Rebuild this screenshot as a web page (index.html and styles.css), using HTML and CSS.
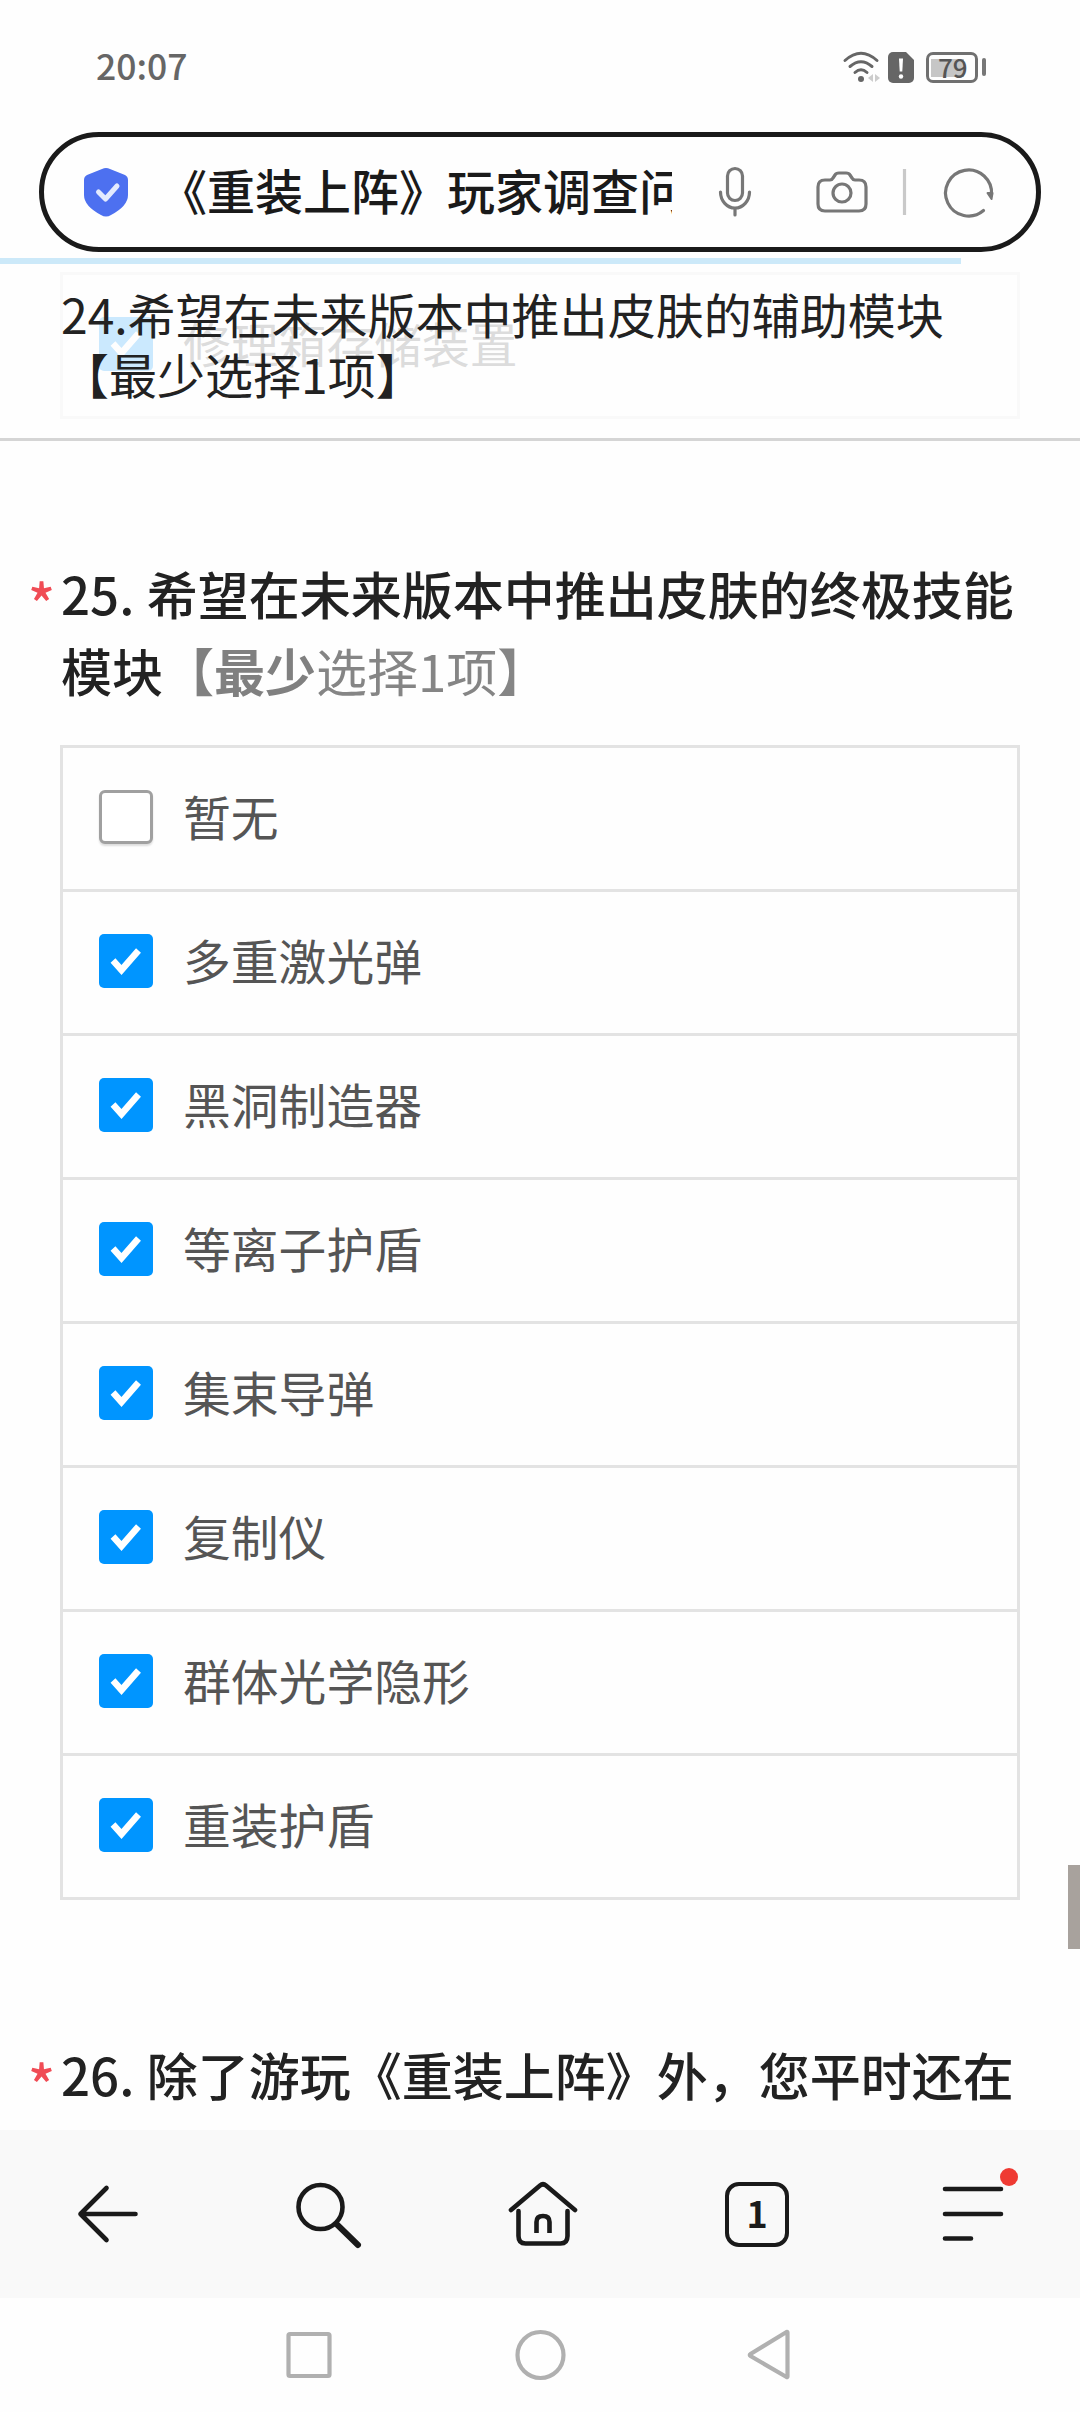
FILE: index.html
```html
<!DOCTYPE html>
<html lang="zh-CN">
<head>
<meta charset="utf-8">
<title>《重装上阵》玩家调查问卷</title>
<link rel="stylesheet" href="styles.css">
</head>
<body>
<svg class="defs" width="0" height="0"><symbol id="tick" viewBox="0 0 54 54"><path d="M14 26.500l8.500 9.500L39.500 16.500" fill="none" stroke="#fff" stroke-width="6.500"/></symbol></svg>
<div class="screen">
  <header class="status">
    <span class="time">20:07</span>
    <div class="status-icons">
      <svg class="wifi" width="38" height="34" viewBox="842 50 38 34" fill="none" stroke="#666" stroke-width="3" stroke-linecap="round"><path d="M845 60.500q16-14.500 32 0M850 66.500q11-9.500 22 0M855 72.500q6-5.500 12 0"/><circle cx="861" cy="79" r="3" fill="#666" stroke="none"/><path d="M873 74v8l-5-4zM875 74v8l5-4z" fill="#ccc" stroke="none"/></svg>
      <svg class="sim" width="26" height="31" viewBox="0 0 26 31"><path d="M5 0h13l8 8v18a5 5 0 0 1-5 5H5a5 5 0 0 1-5-5V5a5 5 0 0 1 5-5z" fill="#666"/><path d="M11 6.500h4l-.7 13h-2.600z" fill="#fff"/><circle cx="13" cy="24.500" r="2.200" fill="#fff"/></svg>
      <div class="battery"><span>79</span></div><i class="battery-cap"></i>
    </div>
  </header>
  <div class="address">
    <svg width="46" height="50" viewBox="0 0 46 50"><path d="M19 2q4-2 8 0l15 6q3 1.500 3 5v15q0 11-17 20-5 3-10 0Q1 39 1 28V13q0-3.500 3-5z" fill="#4d70f0"/><path d="M15.500 25l7 7L34 19" fill="none" stroke="#e3eafe" stroke-width="5" stroke-linecap="round" stroke-linejoin="round"/></svg>
    <div class="title">《重装上阵》玩家调查问卷</div>
    <svg class="actions" width="300" height="60" viewBox="700 162 300 60" fill="none" stroke="#777" stroke-width="3.200" stroke-linecap="round" stroke-linejoin="round"><rect x="727.500" y="168.500" width="15" height="32" rx="7.500"/><path d="M720.500 192a14.500 16 0 0 0 29 0M735 208v7"/><path d="M825 180h5q2 0 3-2l2-3q1-2 4-2h7q3 0 4 2l2 3q1 2 3 2h4q7 0 7 7v17q0 7-7 7h-34q-7 0-7-7v-17q0-7 7-7z"/><circle cx="842" cy="193" r="9"/><path d="M904.500 169v46" stroke="#c9c9c9" stroke-linecap="butt"/><path d="M983.500 210.500A23 23 0 1 1 991.500 195"/><path d="M987.500 193h5l-1 6z" fill="#777" stroke-width="2"/></svg>
  </div>
  <main class="content">
    <div class="options previous"><div class="option checked"><svg class="box"><use href="#tick"/></svg><span>修理箱存储装置</span></div></div>
    <div class="sticky">
      <i class="progress"></i>
      <p>24.希望在未来版本中推出皮肤的辅助模块<br>【最少选择1项】</p>
    </div>
    <section class="question">
      <h2><span class="star">*</span><span class="num">25. </span>希望在未来版本中推出皮肤的终极技能模块<span class="hint"><b>【最少</b>选择1项】</span></h2>
      <div class="options">
        <div class="option"><i class="box empty"></i><span>暂无</span></div>
        <div class="option checked"><svg class="box"><use href="#tick"/></svg><span>多重激光弹</span></div>
        <div class="option checked"><svg class="box"><use href="#tick"/></svg><span>黑洞制造器</span></div>
        <div class="option checked"><svg class="box"><use href="#tick"/></svg><span>等离子护盾</span></div>
        <div class="option checked"><svg class="box"><use href="#tick"/></svg><span>集束导弹</span></div>
        <div class="option checked"><svg class="box"><use href="#tick"/></svg><span>复制仪</span></div>
        <div class="option checked"><svg class="box"><use href="#tick"/></svg><span>群体光学隐形</span></div>
        <div class="option checked"><svg class="box"><use href="#tick"/></svg><span>重装护盾</span></div>
      </div>
    </section>
    <section class="question next">
      <h2><span class="star">*</span><span class="num">26. </span>除了游玩《重装上阵》外，您平时还在</h2>
    </section>
    <i class="scrollbar"></i>
  </main>
  <nav class="toolbar">
    <svg width="72" height="72" viewBox="71.500 2178 72 72"><path d="M106 2188l-26 26 26 26M80 2214h55"/></svg>
    <svg width="72" height="72" viewBox="291 2178 72 72"><circle cx="320.500" cy="2207" r="22"/><path d="M337.500 2225l20.500 20" stroke-width="6"/></svg>
    <svg width="72" height="72" viewBox="510 2178 72 72"><path d="M511 2210l29-24.500q3-2.500 6 0l29 24.500M518.500 2211v25q0 7.500 7 7.500h35q7 0 7-7.500v-25"/><path d="M536.500 2233v-11q0-6 6.500-6t6.500 6v11" stroke-linecap="butt"/></svg>
    <div class="tabs">1</div>
    <svg width="84" height="84" viewBox="936 2172 84 84"><path d="M945 2189h56M945 2214h56M945 2238.500h26"/><circle class="dot" cx="1009" cy="2177" r="9"/></svg>
  </nav>
  <div class="system">
    <svg width="50" height="54" viewBox="284 2328 50 54"><rect x="288.500" y="2334" width="41" height="42" rx="1.500"/></svg>
    <svg width="54" height="54" viewBox="511.500 2328 54 54"><circle cx="540" cy="2355" r="23"/></svg>
    <svg width="50" height="54" viewBox="743 2328 50 54"><path d="M787.500 2332.500v44q0 1-1 .5l-36-21q-1.500-1 0-2l36-22q1-.5 1 .5z"/></svg>
  </div>
</div>
</body>
</html>
```

FILE: styles.css
```css
* { box-sizing: border-box; }
body { margin: 0; background: #fefefe; font-family: "Noto Sans CJK SC", sans-serif; text-spacing-trim: space-all; }
h2, p { margin: 0; }
i { display: block; }
svg { display: block; flex: none; overflow: visible; }
.defs { position: absolute; }
.screen { width: 1080px; height: 2412px; display: flex; flex-direction: column; overflow: hidden; }

.status { height: 132px; flex: none; display: flex; justify-content: space-between; padding: 50px 94px 0 96px; color: #666; }
.time { font-size: 35.500px; line-height: 30px; font-weight: 500; }
.status-icons { display: flex; align-items: flex-start; }
.sim { margin: 2px 12px 0 8px; }
.battery { width: 52px; height: 31px; margin-top: 2px; border: 3px solid #707070; border-radius: 7px; padding: 2px; display: flex; }
.battery span { width: 42px; height: 21px; font-size: 26px; line-height: 19px; padding-left: 7px; font-weight: 500; color: #555; background: linear-gradient(#c6c6c6, #c6c6c6) 0 2px / 33px 18px no-repeat; }
.battery-cap { width: 4px; height: 18px; margin: 8px 0 0 4px; background: #777; border-radius: 2px; }

.address { height: 120px; flex: none; margin: 0 39px; border: 5px solid #1a1a1a; border-radius: 60px; display: flex; align-items: center; padding-left: 39px; }
.title { width: 513px; margin: 0 28px 6px 30px; overflow: hidden; white-space: nowrap; font-size: 48px; font-weight: 500; line-height: 70px; color: #1a1a1a; }

.content { position: relative; height: 1878px; flex: none; overflow: hidden; }
.options { margin: 0 60px; border: 3px solid #e3e3e3; border-top: 0; }
.option { height: 144px; border-top: 3px solid #e3e3e3; display: flex; align-items: center; gap: 30px; padding-left: 36px; font-size: 47.800px; line-height: 70px; color: #555; }
.option:first-child { margin: 0 -3px; padding-left: 39px; }
.option span { padding-bottom: 5px; }
.box { width: 54px; height: 54px; flex: none; border-radius: 5px; background: #0095ff; margin-bottom: 4px; }
.empty { background: #fff; border: 3px solid #a0a0a0; border-radius: 6px; box-shadow: 0 2px 2px #ddd; }
.previous { margin-top: 20px; height: 147px; }
.sticky { position: absolute; top: 6px; left: 0; width: 1080px; height: 183px; border-bottom: 3px solid #d5d5d5; background: rgba(254, 254, 254, .8); }
.progress { width: 961px; height: 6px; background: #cce9f9; }
.sticky p { padding: 19px 0 0 61px; font-size: 48px; line-height: 60px; color: #222; }

.question { margin-top: 136px; }
.question h2 { position: relative; padding-left: 61px; width: 1040px; font-size: 51px; line-height: 77px; font-weight: 500; color: #222; }
.star { position: absolute; left: 28px; top: 8px; font-size: 56px; font-weight: 500; color: #f04c55; }
.num { margin-right: 1px; }
.hint { color: #858585; font-weight: 400; }
.hint b { font-weight: 700; color: #808080; }
.question .options { margin-top: 36px; border-bottom: 3px solid #e3e3e3; }
.next { margin-top: 136px; }
.scrollbar { position: absolute; right: 0; top: 1613px; width: 12px; height: 84px; background: #a8a29d; }

.toolbar { height: 168px; flex: none; background: #f9f9f9; display: flex; align-items: center; padding-left: 72px; gap: 147px; }
.toolbar svg { fill: none; stroke: #1a1a1a; stroke-width: 4.600px; stroke-linecap: round; stroke-linejoin: round; }
.toolbar .dot { fill: #ef3a33; stroke: none; }
.tabs { width: 64px; height: 65px; margin-left: -4px; border: 4.500px solid #1a1a1a; border-radius: 14px; text-align: center; font-size: 36px; font-weight: 700; line-height: 52px; color: #1a1a1a; }
.system { flex: 1; display: flex; align-items: center; justify-content: space-between; padding: 0 287px 0 284px; }
.system svg { fill: none; stroke: #b0b0b0; stroke-width: 4.200px; }
```
